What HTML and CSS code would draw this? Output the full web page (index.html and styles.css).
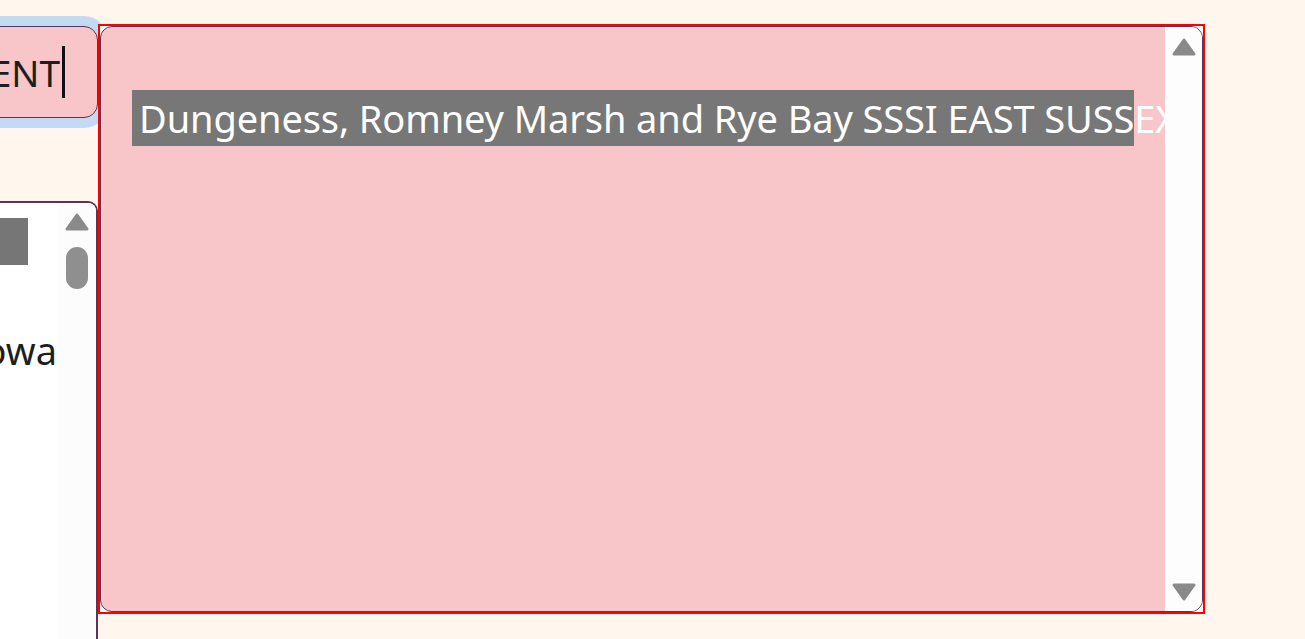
FILE: index.html
```html
<!DOCTYPE html>
<html>
<head>
<meta charset="utf-8">
<link rel="stylesheet" href="styles.css">
</head>
<body>
<div class="page">
  <div class="left">
    <div class="search"><span class="search-text">ENT</span><span class="caret"></span></div>
    <div class="list">
      <div class="list-body">
        <div class="sel-block"></div>
        <div class="list-text">owa</div>
      </div>
      <div class="scroll small">
        <svg class="arrow" width="24" height="18" viewBox="0 0 24 18"><path d="M12 2 L22 16 L2 16 Z"/></svg>
        <div class="thumb"></div>
      </div>
    </div>
  </div>
  <div class="frame">
    <div class="editor">
      <div class="editor-body"><span class="sel">Dungeness, Romney Marsh and Rye Bay SSSI EAST SUSS</span>EX</div>
      <div class="scroll big">
        <svg class="arrow" width="24" height="18" viewBox="0 0 24 18"><path d="M12 2 L22 16 L2 16 Z"/></svg>
        <svg class="arrow" width="24" height="18" viewBox="0 0 24 18"><path d="M12 16 L22 2 L2 2 Z"/></svg>
      </div>
    </div>
  </div>
</div>
</body>
</html>
```
FILE: styles.css
```css
html, body {
  margin: 0;
  padding: 0;
}
body {
  background: #fff7ee;
  overflow: hidden;
  font-family: "Noto Sans", "Open Sans", sans-serif;
  width: 1305px;
  height: 639px;
}
.page {
  display: flex;
  height: 639px;
}
.left {
  flex: none;
  width: 98px;
  display: flex;
  flex-direction: column;
  padding-top: 26px;
  box-sizing: border-box;
}
.search {
  flex: none;
  margin-left: -200px;
  width: 298px;
  height: 92px;
  box-sizing: border-box;
  border: 1px solid #5b3453;
  border-radius: 14px;
  background: #f8c6c8;
  box-shadow: 0 0 0 10px #c4daf4;
  display: flex;
  align-items: center;
  justify-content: flex-end;
  padding-right: 32px;
  font-size: 37px;
  color: #1e1e1e;
}
.caret {
  width: 3px;
  height: 52px;
  background: #111;
  margin-left: 2px;
}
.list {
  flex: 1;
  margin-top: 83px;
  margin-left: -200px;
  width: 298px;
  box-sizing: border-box;
  background: #fff;
  border-top: 2px solid #5b3453;
  border-right: 2px solid #5b3453;
  border-top-right-radius: 10px;
  display: flex;
  overflow: hidden;
}
.list-body {
  flex: 1;
  overflow: hidden;
  display: flex;
  flex-direction: column;
}
.sel-block {
  margin-top: 15px;
  margin-left: 200px;
  width: 28px;
  height: 47px;
  background: #767676;
}
.list-text {
  margin-top: 57px;
  font-size: 38px;
  line-height: 56px;
  color: #1e1e1e;
  text-align: right;
  white-space: nowrap;
  margin-right: 1px;
}
.scroll {
  flex: none;
  background: #fcfcfc;
  display: flex;
  flex-direction: column;
  align-items: center;
}
.scroll.small {
  width: 38px;
  padding-top: 10px;
  gap: 16px;
}
.arrow path {
  fill: #8a8a8a;
  stroke: #8a8a8a;
  stroke-width: 3;
  stroke-linejoin: round;
}
.thumb {
  width: 22px;
  height: 42px;
  border-radius: 11px;
  background: #8f8f8f;
}
.frame {
  position: relative;
  z-index: 1;
  flex: none;
  margin-top: 24px;
  width: 1107px;
  height: 590px;
  box-sizing: border-box;
  border: 2px solid #f00;
  background: #fffdfb;
}
.editor {
  width: 1103px;
  height: 586px;
  box-sizing: border-box;
  border: 1px solid #5b3453;
  border-radius: 12px;
  background: #f8c6c8;
  display: flex;
  overflow: hidden;
}
.editor-body {
  flex: 1;
  min-width: 0;
  overflow: hidden;
  white-space: nowrap;
  padding: 63px 0 0 31px;
  font-size: 38px;
  line-height: 56px;
  color: #fff;
  letter-spacing: -0.1px;
}
.sel {
  background: #777;
  display: inline-block;
  padding-left: 7px;
}
.scroll.big {
  width: 37px;
  background: #fdfdfd;
  justify-content: space-between;
  padding: 11px 0 10px;
}
```
